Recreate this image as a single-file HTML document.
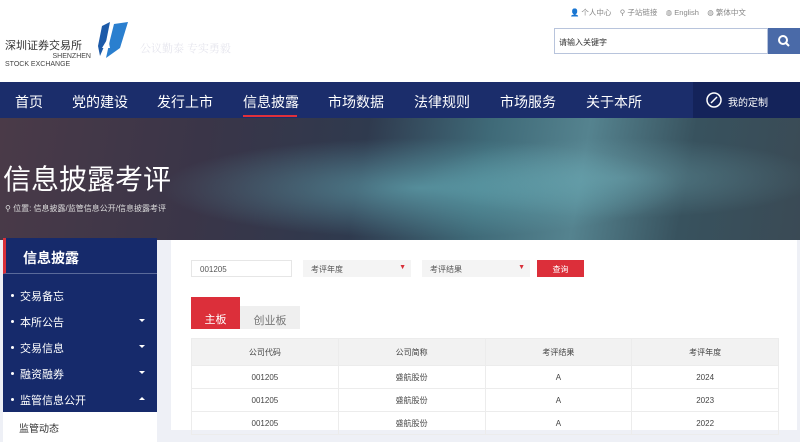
<!DOCTYPE html>
<html><head><meta charset="utf-8"><style>
*{margin:0;padding:0;box-sizing:border-box}
body{width:800px;height:430px;overflow:hidden;background:#eef0f6;font-family:"Liberation Sans","Noto Sans CJK SC",sans-serif;position:relative}
.abs{position:absolute}
.hdr{left:0;top:0;width:800px;height:82px;background:#fff}
.nav{left:0;top:82px;width:800px;height:36px;background:#1b2d6b}
.nav span{position:absolute;top:10px;color:#fff;font-size:14px}
.banner{left:0;top:118px;width:800px;height:122px;background:radial-gradient(ellipse 260px 50px at 420px 70px,rgba(110,190,200,.55),transparent),radial-gradient(ellipse 200px 40px at 620px 60px,rgba(120,180,190,.4),transparent),linear-gradient(100deg,#4a3a48 0%,#3a3548 25%,#2f3a4e 45%,#3f6a78 60%,#55838f 72%,#38525e 85%,#3a4a55 100%)}
.side{left:3px;top:238px;width:154px;height:192px;background:#162a6b}
.side .t{height:36px;border-left:3px solid #d8303a;border-bottom:1px solid #5a6a9a;color:#fff;font-size:14px;font-weight:bold;padding:10px 0 0 17px}
.side .i{height:26px;color:#fff;font-size:11px;padding:6px 0 0 17px;position:relative}
.side .i:before{content:"";position:absolute;left:8px;top:12px;width:3px;height:3px;background:#fff;border-radius:50%}
.side .i b{position:absolute;right:12px;top:11px;border-left:3px solid transparent;border-right:3px solid transparent;border-top:3px solid #fff}
.main{left:171px;top:240px;width:626px;height:190px;background:#fff}
.f{position:absolute;height:17px;font-size:8px;color:#555;padding:4px 8px}
table{position:absolute;left:191px;top:338px;width:588px;border-collapse:collapse;font-size:8px;color:#444}
td{border:1px solid #ececec;text-align:center;height:23px}
tr.h td{background:#f2f2f2;height:27px}
</style></head><body>
<div class="abs hdr"></div>
<div class="abs" style="left:5px;top:37px;font-size:11px;color:#333">深圳证券交易所</div>
<div class="abs" style="left:38px;top:53px;font-size:7px;color:#444;line-height:8px;text-align:right;width:53px">SHENZHEN</div>
<div class="abs" style="left:5px;top:61px;font-size:7px;color:#444">STOCK EXCHANGE</div>
<svg class="abs" style="left:96px;top:18px" width="36" height="42"><path d="M6 8 L14 4 L10 24 L4 38 L2 28Z" fill="#1c5aa8"/><path d="M18 6 L32 4 L24 30 L10 40 L14 22Z" fill="#2a7fcf"/><path d="M6 30 L12 20 L14 30Z" fill="#fff"/></svg>
<div class="abs" style="left:140px;top:40px;font-size:11px;color:#e6e6ee;font-family:'Noto Serif CJK SC',serif">公议勤泰 专实勇毅</div>
<div class="abs" style="left:570px;top:7px;font-size:7.5px;color:#888;word-spacing:0">👤 个人中心 &nbsp;&nbsp; ⚲ 子站链接 &nbsp;&nbsp; ◍ English &nbsp;&nbsp; ◍ 繁体中文</div>
<div class="abs" style="left:554px;top:28px;width:214px;height:26px;border:1px solid #b8c4dc;font-size:8px;color:#333;padding:8px 4px">请输入关键字</div>
<div class="abs" style="left:768px;top:28px;width:32px;height:26px;background:#4a6aa8"><svg width="32" height="26"><circle cx="15" cy="12" r="4" stroke="#fff" stroke-width="2" fill="none"/><path d="M18 15 L21 18" stroke="#fff" stroke-width="2"/></svg></div>
<div class="abs nav">
<span style="left:15px">首页</span><span style="left:72px">党的建设</span><span style="left:157px">发行上市</span><span style="left:243px">信息披露</span><span style="left:328px">市场数据</span><span style="left:414px">法律规则</span><span style="left:500px">市场服务</span><span style="left:586px">关于本所</span>
<div style="position:absolute;left:243px;top:33px;width:54px;height:2px;background:#e0303a"></div>
<div style="position:absolute;left:693px;top:0;width:107px;height:36px;background:#14235a"></div>
<svg style="position:absolute;left:705px;top:9px" width="18" height="18"><circle cx="9" cy="9" r="7" stroke="#fff" stroke-width="1.5" fill="none"/><path d="M6 12 L12 6" stroke="#fff" stroke-width="1.5"/></svg>
<span style="left:728px;top:12px;font-size:10px">我的定制</span>
</div>
<div class="abs banner"></div>
<div class="abs" style="left:3px;top:158px;font-size:28px;color:#fff">信息披露考评</div>
<div class="abs" style="left:5px;top:203px;font-size:8px;color:#ddd">⚲ 位置: 信息披露/监管信息公开/信息披露考评</div>
<div class="abs side">
<div class="t">信息披露</div>
<div style="height:8px"></div>
<div class="i">交易备忘</div>
<div class="i">本所公告<b></b></div>
<div class="i">交易信息<b></b></div>
<div class="i">融资融券<b></b></div>
<div class="i">监管信息公开<b style="border-top:0;border-bottom:3px solid #fff"></b></div>
<div style="background:#fff;height:30px;color:#333;font-size:10px;padding:8px 0 0 16px">监管动态</div>
</div>
<div class="abs main"></div>
<div class="f" style="left:191px;top:260px;width:101px;border:1px solid #e6e6e6">001205</div>
<div class="f" style="left:303px;top:260px;width:108px;background:#f4f4f4">考评年度<span style="position:absolute;right:5px;top:4px;color:#d8303a;font-size:7px">▼</span></div>
<div class="f" style="left:422px;top:260px;width:108px;background:#f4f4f4">考评结果<span style="position:absolute;right:5px;top:4px;color:#d8303a;font-size:7px">▼</span></div>
<div class="f" style="left:537px;top:260px;width:47px;background:#dc2f3a;color:#fff;text-align:center;padding:4px 0">查询</div>
<div class="abs" style="left:191px;top:297px;width:49px;height:32px;background:#dc2f3a;color:#fff;font-size:11px;text-align:center;padding-top:14px">主板</div>
<div class="abs" style="left:240px;top:306px;width:60px;height:23px;background:#efefef;color:#777;font-size:11px;text-align:center;padding-top:6px">创业板</div>
<table>
<tr class="h"><td>公司代码</td><td>公司简称</td><td>考评结果</td><td>考评年度</td></tr>
<tr><td>001205</td><td>盛航股份</td><td>A</td><td>2024</td></tr>
<tr><td>001205</td><td>盛航股份</td><td>A</td><td>2023</td></tr>
<tr><td>001205</td><td>盛航股份</td><td>A</td><td>2022</td></tr>
</table>
</body></html>
